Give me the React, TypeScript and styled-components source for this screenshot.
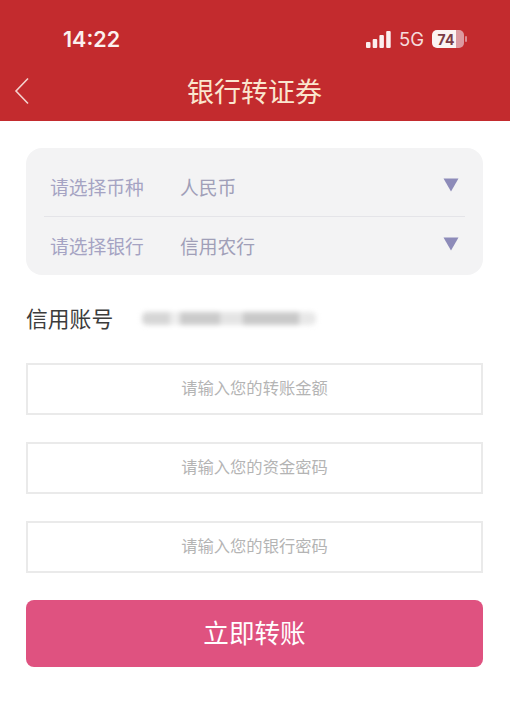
import React from "react";
import styled, { createGlobalStyle } from "styled-components";

const Global = createGlobalStyle`
  html, body { margin: 0; padding: 0; background: #fff; }
  body { font-family: "Liberation Sans", "Noto Sans CJK SC", sans-serif; }
`;

const CJK = `"Noto Sans CJK SC", "Liberation Sans", sans-serif`;

const Page = styled.div`
  width: 510px;
  height: 708px;
  overflow: hidden;
  background: #fff;
  display: flex;
  flex-direction: column;
`;

const Header = styled.header`
  height: 121px;
  background: #c32b2e;
  display: flex;
  flex-direction: column;
`;

const StatusBar = styled.div`
  height: 72px;
  padding: 6px 46px 0 63px;
  box-sizing: border-box;
  display: flex;
  align-items: center;
  justify-content: space-between;
  color: #fff;
`;

const Time = styled.span`
  font-family: "Inter", "Liberation Sans", sans-serif;
  font-size: 21.5px;
  font-weight: 600;
  color: #fbf1ee;
`;

const StatusIcons = styled.div`
  display: flex;
  align-items: center;
  gap: 8px;
`;

const Network = styled.span`
  font-family: "Inter", "Liberation Sans", sans-serif;
  font-size: 18.5px;
  color: #f6dcdc;
`;

const Battery = styled.div`
  width: 32px;
  height: 18px;
  border-radius: 5px;
  background: linear-gradient(90deg, #fbf3f3 0 74%, #dc9aa0 74% 100%);
  display: flex;
  align-items: center;
  justify-content: center;
  padding-right: 4px;
  box-sizing: border-box;
  font-family: "Inter", "Liberation Sans", sans-serif;
  font-size: 14px;
  font-weight: 700;
  color: #7a3b46;
  position: relative;
  &::after {
    content: "";
    position: absolute;
    right: -3px;
    top: 6px;
    width: 2px;
    height: 6px;
    border-radius: 1px;
    background: #dc8a90;
  }
`;

const NavBar = styled.div`
  height: 49px;
  display: flex;
  align-items: center;
  justify-content: center;
  position: relative;
`;

const BackIcon = styled.svg`
  position: absolute;
  left: 14px;
  top: 5px;
`;

const Title = styled.h1`
  margin: -11px 0 0 -1px;
  font-family: ${CJK};
  font-size: 27px;
  font-weight: 400;
  color: #fae6cf;
  line-height: 38px;
`;

const Content = styled.main`
  padding: 27px 27px 0 26px;
  display: flex;
  flex-direction: column;
`;

const SelectPanel = styled.section`
  height: 127px;
  box-sizing: border-box;
  border-radius: 16px;
  background: #f3f3f4;
  padding: 10px 18px 0;
  display: flex;
  flex-direction: column;
`;

const SelectRow = styled.div`
  flex: 1;
  display: flex;
  align-items: center;
  padding: 0 6px;
  font-family: ${CJK};
  font-size: 18.8px;
  & + & {
    border-top: 1px solid #e4e4e8;
  }
`;

const SelectLabel = styled.span`
  width: 130px;
  margin-top: -1px;
  color: #a5a3c3;
`;

const SelectValue = styled.span`
  flex: 1;
  margin-top: -1px;
  color: #a09fb8;
`;

const Caret = styled.svg`
  margin-top: -5px;
`;

const AccountRow = styled.div`
  height: 88px;
  display: flex;
  align-items: center;
  font-family: ${CJK};
  font-size: 21.8px;
  color: #3c3c3c;
`;

const AccountLabel = styled.span`
  width: 116px;
  padding-bottom: 3px;
`;

const RedactedNumber = styled.div`
  width: 174px;
  height: 13px;
  margin-top: -2px;
  border-radius: 5px;
  filter: blur(2.4px);
  background: linear-gradient(
    90deg,
    #d6d6d6 0 16%,
    #eeeeee 16% 22%,
    #cbcbcb 22% 45%,
    #e4e4e4 45% 58%,
    #c9c9c9 58% 90%,
    #e8e8e8 90% 100%
  );
`;

const Fields = styled.div`
  display: flex;
  flex-direction: column;
  gap: 27px;
`;

const Field = styled.div`
  height: 52px;
  box-sizing: border-box;
  border: 2px solid #eaeaea;
  padding-bottom: 4px;
  display: flex;
  align-items: center;
  justify-content: center;
  font-family: ${CJK};
  font-size: 16.3px;
  color: #b4b4b4;
`;

const SubmitButton = styled.button`
  margin-top: 27px;
  height: 67px;
  border: 0;
  border-radius: 8px;
  background: #df5280;
  color: #fff;
  font-family: ${CJK};
  font-size: 25.6px;
  font-weight: 400;
  padding: 0 0 4px;
`;

const Triangle = () => (
  <Caret width="16" height="14" viewBox="0 0 16 14">
    <path d="M0.5 0.5H15.5L8 13.5Z" fill="#8d8bb9" />
  </Caret>
);

export default function App() {
  return (
    <Page>
      <Global />
      <Header>
        <StatusBar>
          <Time>14:22</Time>
          <StatusIcons>
            <svg width="25" height="17" viewBox="0 0 25 17">
              <rect x="0" y="11" width="4.5" height="6" rx="1" fill="#fbeeee" />
              <rect x="6.7" y="8" width="4.5" height="9" rx="1" fill="#fbeeee" />
              <rect x="13.4" y="4" width="4.5" height="13" rx="1" fill="#fbeeee" />
              <rect x="20.2" y="0" width="4.5" height="17" rx="1" fill="#fbeeee" />
            </svg>
            <Network>5G</Network>
            <Battery>74</Battery>
          </StatusIcons>
        </StatusBar>
        <NavBar>
          <BackIcon width="16" height="28" viewBox="0 0 16 28">
            <path d="M14 1.5L2 14L14 26.5" fill="none" stroke="#f4d3cf" strokeWidth="1.6" />
          </BackIcon>
          <Title>银行转证券</Title>
        </NavBar>
      </Header>
      <Content>
        <SelectPanel>
          <SelectRow>
            <SelectLabel>请选择币种</SelectLabel>
            <SelectValue>人民币</SelectValue>
            <Triangle />
          </SelectRow>
          <SelectRow>
            <SelectLabel>请选择银行</SelectLabel>
            <SelectValue>信用农行</SelectValue>
            <Triangle />
          </SelectRow>
        </SelectPanel>
        <AccountRow>
          <AccountLabel>信用账号</AccountLabel>
          <RedactedNumber />
        </AccountRow>
        <Fields>
          <Field>请输入您的转账金额</Field>
          <Field>请输入您的资金密码</Field>
          <Field>请输入您的银行密码</Field>
        </Fields>
        <SubmitButton>立即转账</SubmitButton>
      </Content>
    </Page>
  );
}
